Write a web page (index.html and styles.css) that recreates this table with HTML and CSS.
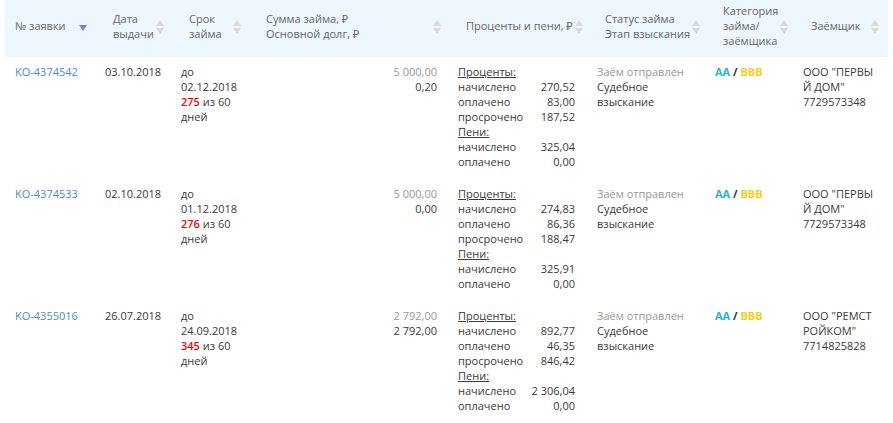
FILE: index.html
```html
<!DOCTYPE html>
<html lang="ru">
<head>
<meta charset="utf-8">
<link rel="stylesheet" href="styles.css">
</head>
<body>
<table class="loans">
  <colgroup>
    <col class="c1"><col class="c2"><col class="c3"><col class="c4"><col class="c5"><col class="c6"><col class="c7"><col class="c8">
  </colgroup>
  <thead>
    <tr>
      <th class="first"><div class="hd"><span class="ht">№ заявки</span><span class="sort-active"></span></div></th>
      <th><div class="hd"><span class="ht">Дата<br>выдачи</span><span class="sort"></span></div></th>
      <th><div class="hd"><span class="ht">Срок<br>займа</span><span class="sort"></span></div></th>
      <th><div class="hd"><span class="ht">Сумма займа, ₽<br>Основной долг, ₽</span><span class="sort"></span></div></th>
      <th><div class="hd"><span class="ht">Проценты и пени, ₽</span><span class="sort"></span></div></th>
      <th><div class="hd"><span class="ht">Статус займа<br>Этап взыскания</span><span class="sort"></span></div></th>
      <th><div class="hd"><span class="ht">Категория<br>займа/<br>заёмщика</span><span class="sort"></span></div></th>
      <th><div class="hd"><span class="ht">Заёмщик</span><span class="sort"></span></div></th>
    </tr>
  </thead>
  <tbody>
    <tr>
      <td class="first"><a class="link" href="#">KO-4374542</a></td>
      <td>03.10.2018</td>
      <td>до<br>02.12.2018<br><span class="overdue">275</span> из 60<br>дней</td>
      <td class="sum"><span class="muted">5 000,00</span><br>0,20</td>
      <td><div class="fees">
        <span class="u">Проценты:</span><span></span>
        <span>начислено</span><span class="v">270,52</span>
        <span>оплачено</span><span class="v">83,00</span>
        <span>просрочено</span><span class="v">187,52</span>
        <span class="u">Пени:</span><span></span>
        <span>начислено</span><span class="v">325,04</span>
        <span>оплачено</span><span class="v">0,00</span>
      </div></td>
      <td><span class="muted">Заём отправлен</span><br>Судебное<br>взыскание</td>
      <td><span class="cat"><span class="aa">AA</span> / <span class="bbb">BBB</span></span></td>
      <td class="borrower">ООО "ПЕРВЫЙ ДОМ"<br>7729573348</td>
    </tr>
    <tr>
      <td class="first"><a class="link" href="#">KO-4374533</a></td>
      <td>02.10.2018</td>
      <td>до<br>01.12.2018<br><span class="overdue">276</span> из 60<br>дней</td>
      <td class="sum"><span class="muted">5 000,00</span><br>0,00</td>
      <td><div class="fees">
        <span class="u">Проценты:</span><span></span>
        <span>начислено</span><span class="v">274,83</span>
        <span>оплачено</span><span class="v">86,36</span>
        <span>просрочено</span><span class="v">188,47</span>
        <span class="u">Пени:</span><span></span>
        <span>начислено</span><span class="v">325,91</span>
        <span>оплачено</span><span class="v">0,00</span>
      </div></td>
      <td><span class="muted">Заём отправлен</span><br>Судебное<br>взыскание</td>
      <td><span class="cat"><span class="aa">AA</span> / <span class="bbb">BBB</span></span></td>
      <td class="borrower">ООО "ПЕРВЫЙ ДОМ"<br>7729573348</td>
    </tr>
    <tr>
      <td class="first"><a class="link" href="#">KO-4355016</a></td>
      <td>26.07.2018</td>
      <td>до<br>24.09.2018<br><span class="overdue">345</span> из 60<br>дней</td>
      <td class="sum"><span class="muted">2 792,00</span><br>2 792,00</td>
      <td><div class="fees">
        <span class="u">Проценты:</span><span></span>
        <span>начислено</span><span class="v">892,77</span>
        <span>оплачено</span><span class="v">46,35</span>
        <span>просрочено</span><span class="v">846,42</span>
        <span class="u">Пени:</span><span></span>
        <span>начислено</span><span class="v">2 306,04</span>
        <span>оплачено</span><span class="v">0,00</span>
      </div></td>
      <td><span class="muted">Заём отправлен</span><br>Судебное<br>взыскание</td>
      <td><span class="cat"><span class="aa">AA</span> / <span class="bbb">BBB</span></span></td>
      <td class="borrower">ООО "РЕМСТРОЙКОМ"<br>7714825828</td>
    </tr>
  </tbody>
</table>
</body>
</html>
```
FILE: styles.css
```css
* { box-sizing: border-box; }
html, body { margin: 0; padding: 0; background: #fff; }
body {
  padding: 0 5px;
  font-family: "Open Sans", "Noto Sans", sans-serif;
  font-size: 11px;
  line-height: 15px;
  color: #3a3a3a;
}
.loans {
  border-collapse: collapse;
  table-layout: fixed;
  width: 883px;
}
.c1 { width: 92px; }
.c2 { width: 76px; }
.c3 { width: 77px; }
.c4 { width: 200px; }
.c5 { width: 139px; }
.c6 { width: 118px; }
.c7 { width: 88px; }
.c8 { width: 93px; }

thead th {
  background: #eef7fe;
  font-weight: 400;
  color: #666;
  text-align: left;
  vertical-align: middle;
  height: 57px;
  padding: 3px 8px 9px 16px;
}
thead th.first { padding-left: 10px; }
.hd {
  display: flex;
  align-items: center;
  justify-content: space-between;
  gap: 2px;
}
.ht { white-space: nowrap; }
.sort {
  flex: none;
  width: 9px;
  height: 14px;
  position: relative;
  margin-top: 2px;
}
.sort::before, .sort::after {
  content: "";
  position: absolute;
  left: 0;
  border-left: 4.5px solid transparent;
  border-right: 4.5px solid transparent;
}
.sort::before { top: 0; border-bottom: 6px solid #dadada; }
.sort::after { bottom: 0; border-top: 6px solid #dadada; }
.sort-active {
  flex: none;
  width: 0; height: 0;
  margin-right: 2px;
  margin-top: 4px;
  border-left: 4px solid transparent;
  border-right: 4px solid transparent;
  border-top: 6px solid #7a80d6;
}

tbody td {
  vertical-align: top;
  padding: 7px 8px 10px 8px;
}
tbody td.first { padding-left: 10px; }
.link { color: #4a8ccd; text-decoration: none; }
.overdue { color: #ff0000; font-weight: 600; }
.muted { color: #999; }
td.sum { text-align: right; padding-right: 13px; }
.fees {
  display: grid;
  grid-template-columns: 1fr auto;
  width: 117px;
}
.fees .u { text-decoration: underline; }
.fees .v { text-align: right; }
.cat { font-weight: 700; color: #333; }
.aa { color: #2bb5c8; }
.bbb { color: #f8cc1f; }
.borrower { word-break: break-all; padding-right: 14px; }
```
